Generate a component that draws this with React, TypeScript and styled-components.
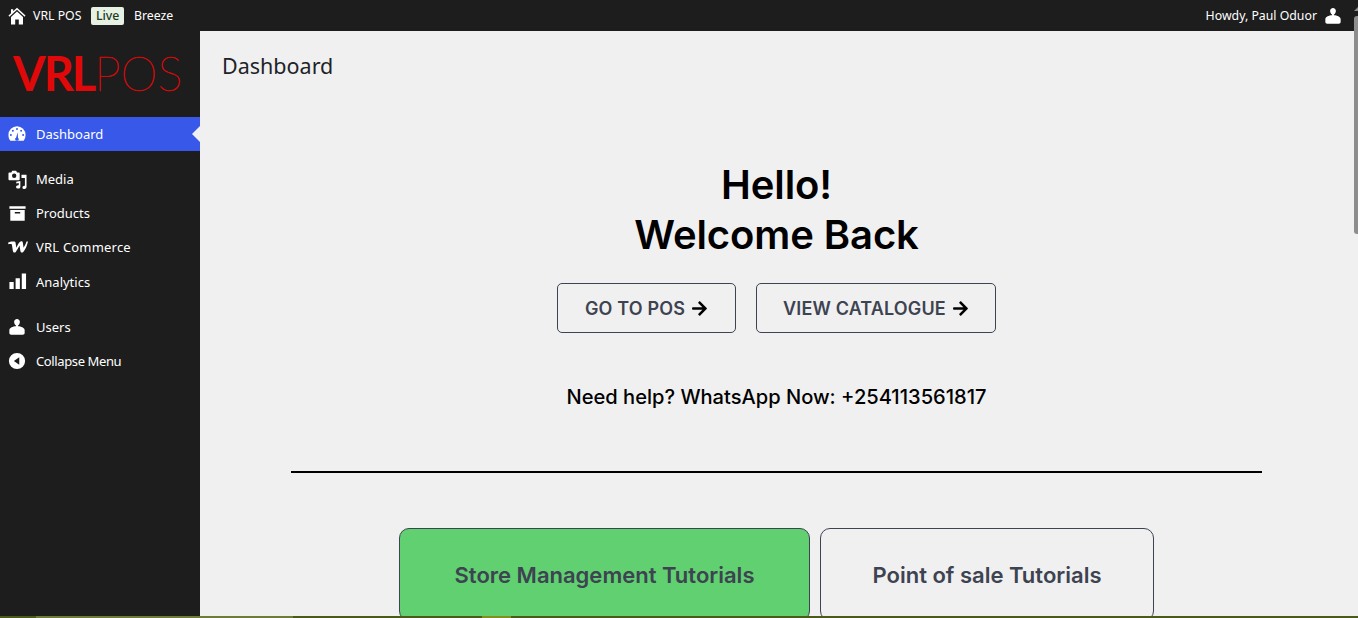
import React from 'react'
import styled, { createGlobalStyle } from 'styled-components'
import { FaArrowRight } from 'react-icons/fa'

const GlobalStyle = createGlobalStyle`
  html, body {
    margin: 0;
    padding: 0;
    height: 100%;
    overflow: hidden;
    background: #f0f0f1;
  }
  * { box-sizing: border-box; }
`

const HomeIcon = () => (
  <svg width={18} height={18} viewBox="0 0 18 18" fill="currentColor">
    <path d="M9 .8 17.500 8.600 16.600 9.700 9 2.800 1.400 9.700.5 8.600 3 6.300V2.200h2.200v2.100z" />
    <path d="M3 10 9 4.600l6 5.400v7.500h-4.200v-5H7.200v5H3z" />
  </svg>
)

const UserIcon = ({ size = 18 }: { size?: number }) => (
  <svg width={size} height={size} viewBox="0 0 20 20" fill="currentColor">
    <path d="M10 1c1.900 0 3.200 1.500 3.200 3.400 0 1.700-.9 3.200-2.100 3.800v1c3.300.2 7.400 1.600 7.400 4.400v3.200c0 1.200-1 1.700-2 1.700H3.500c-1 0-2-.5-2-1.700v-3.200c0-2.800 4.100-4.200 7.400-4.400v-1C7.700 7.600 6.800 6.100 6.800 4.400 6.800 2.500 8.100 1 10 1z" />
  </svg>
)

const DashboardIcon = () => (
  <svg width={18} height={18} viewBox="0 0 20 20" fill="currentColor">
    <path
      fillRule="evenodd"
      d="M10 1.500a9.500 9.500 0 0 0-9.500 9.500c0 2.500.7 4.700 2.100 6.500h14.800a10 10 0 0 0 2.100-6.500A9.500 9.500 0 0 0 10 1.500zM10 3.400a1.100 1.100 0 1 1 0 2.200 1.100 1.100 0 0 1 0-2.200zM5.400 5.300a1.100 1.100 0 1 1 0 2.200 1.100 1.100 0 0 1 0-2.200zM14.600 5.300a1.100 1.100 0 1 1 0 2.200 1.100 1.100 0 0 1 0-2.200zM3.200 9.900a1.100 1.100 0 1 1 0 2.200 1.100 1.100 0 0 1 0-2.200zM16.800 9.900a1.100 1.100 0 1 1 0 2.200 1.100 1.100 0 0 1 0-2.200zM10.700 8l.5 6.400c.5.300.8.800.8 1.400 0 .7-.4 1.200-1 1.500H8.900c-.6-.3-1-.8-1-1.500 0-.7.500-1.300 1.100-1.500z"
    />
  </svg>
)

const MediaIcon = () => (
  <svg width={19} height={19} viewBox="0 0 20 20" fill="currentColor">
    <path
      fillRule="evenodd"
      d="M1.500 2.500h2l.9-1.700h4.200l.9 1.700h1.800c.6 0 1 .4 1 1v6.200c0 .6-.4 1-1 1h-9.800c-.6 0-1-.4-1-1V3.500c0-.6.400-1 1-1zm5 1.300a2.300 2.300 0 1 0 0 4.600 2.300 2.300 0 0 0 0-4.600z"
    />
    <path d="M14.200 5H19.500v13c0 1.200-1 2-2.200 2-1.100 0-2.100-.7-2.100-1.700s1-1.800 2.100-1.800c.2 0 .4 0 .5.100V8.300h-3.600zM8.700 12.400l4.300-.8v6c0 1.200-1 2-2.300 2s-2.200-.8-2.200-1.800.9-1.800 2.100-1.800c.3 0 .5 0 .7.100v-2.400l-2.600.5z" />
  </svg>
)

const ArchiveIcon = () => (
  <svg width={19} height={18} viewBox="0 0 20 20" fill="currentColor">
    <path
      fillRule="evenodd"
      d="M1 2.500h18v2.700H1zM2 6.700h16v11.800H2zM7 9v1.500h6V9z"
    />
  </svg>
)

const CommerceIcon = () => (
  <svg width={20} height={12} viewBox="0 0 40 24" fill="currentColor">
    <path d="M0 3.500C3.500 1.200 8.500.5 12.800 1.200c1.400.2 2.200 1.300 2.400 2.700l1.500 9.500C19 7.800 22.300 2.200 25.200 1c2-.8 4.200 0 4.500 2.300l1.500 10.100C33.800 9 36 4.500 37 1h3c-1.600 7.600-5 15.700-9.500 21-1.800 2.100-5.100 1.500-5.600-1.500L23 8.800c-2.300 4.500-5 9.500-7.500 13-1.500 2.100-5 1.800-5.600-1.300L7.600 6.600C5.700 5.600 3 5.800 1 6.300z" />
  </svg>
)

const ChartIcon = () => (
  <svg width={19} height={19} viewBox="0 0 20 20" fill="currentColor">
    <path d="M1.500 10.500h4.500V18H1.500zM8 6.500h4.500V18H8zM14.500 1.500H19V18h-4.500z" />
  </svg>
)

const CollapseIcon = () => (
  <svg width={18} height={18} viewBox="0 0 20 20" fill="currentColor">
    <path
      fillRule="evenodd"
      d="M10 1a9 9 0 1 1 0 18 9 9 0 0 1 0-18zM12.500 5.800 6.500 10l6 4.200z"
    />
  </svg>
)

const navTop = [
  { label: 'Media', icon: <MediaIcon />, spacing: 0 },
  { label: 'Products', icon: <ArchiveIcon />, spacing: 0 },
  { label: 'VRL Commerce', icon: <CommerceIcon />, spacing: 0.2 },
  { label: 'Analytics', icon: <ChartIcon />, spacing: 0 },
]

const navBottom = [
  { label: 'Users', icon: <UserIcon />, spacing: 0 },
  { label: 'Collapse Menu', icon: <CollapseIcon />, spacing: -0.38 },
]

export default function App() {
  return (
    <Page>
      <GlobalStyle />
      <TopBar>
        <TopLeft>
          <HomeLink>
            <HomeIcon />
          </HomeLink>
          <span>VRL POS</span>
          <LiveBadge>Live</LiveBadge>
          <span>Breeze</span>
        </TopLeft>
        <TopRight>
          <span>Howdy, Paul Oduor</span>
          <UserIcon size={18} />
        </TopRight>
      </TopBar>
      <Body>
        <Sidebar>
          <Logo>
            <LogoBold>VRL</LogoBold>
            <LogoThin>POS</LogoThin>
          </Logo>
          <NavRow $active>
            <NavIcon>
              <DashboardIcon />
            </NavIcon>
            Dashboard
          </NavRow>
          <NavGroup>
            {navTop.map((item) => (
              <NavRow key={item.label} $spacing={item.spacing}>
                <NavIcon>{item.icon}</NavIcon>
                {item.label}
              </NavRow>
            ))}
          </NavGroup>
          <NavGroup>
            {navBottom.map((item) => (
              <NavRow key={item.label} $spacing={item.spacing}>
                <NavIcon>{item.icon}</NavIcon>
                {item.label}
              </NavRow>
            ))}
          </NavGroup>
        </Sidebar>
        <Main>
          <PageTitle>Dashboard</PageTitle>
          <Hero>
            <Greeting>
              Hello!
              <br />
              Welcome Back
            </Greeting>
            <Actions>
              <ActionButton $width={179}>
                GO TO POS <FaArrowRight size={17} color="#000" />
              </ActionButton>
              <ActionButton $width={240}>
                VIEW CATALOGUE <FaArrowRight size={17} color="#000" />
              </ActionButton>
            </Actions>
            <Help>Need help? WhatsApp Now: +254113561817</Help>
            <Divider />
            <Tabs>
              <Tab $width={411} $active>
                Store Management Tutorials
              </Tab>
              <Tab $width={334}>Point of sale Tutorials</Tab>
            </Tabs>
          </Hero>
        </Main>
      </Body>
      <ScrollThumb />
      <ScrollArrow />
      <BottomStrip>
        <StripLight />
        <StripBright />
      </BottomStrip>
    </Page>
  )
}

const Page = styled.div`
  position: relative;
  height: 618px;
  overflow: hidden;
  display: flex;
  flex-direction: column;
  font-family: 'Noto Sans', 'Open Sans', sans-serif;
`
const TopBar = styled.header`
  height: 31px;
  flex: none;
  background: #1d1d1d;
  color: #fff;
  font-size: 12.3px;
  display: flex;
  align-items: center;
  justify-content: space-between;
  padding: 0 16px 0 8px;
`
const TopLeft = styled.div`
  display: flex;
  align-items: center;
  gap: 8px;
`
const HomeLink = styled.span`
  display: flex;
  margin-right: -1px;
`
const LiveBadge = styled.span`
  margin: 0 2px;
  background: #e6f1e4;
  color: #1d3a22;
  border-radius: 2px;
  padding: 1px 4.5px;
  line-height: 16px;
  font-weight: 500;
`
const TopRight = styled.div`
  display: flex;
  align-items: center;
  gap: 7px;
`
const Body = styled.div`
  flex: 1;
  display: flex;
  min-height: 0;
`
const Sidebar = styled.aside`
  width: 200px;
  flex: none;
  background: #1d1d1d;
  color: #fff;
`
const Logo = styled.div`
  height: 86px;
  display: flex;
  align-items: center;
  padding: 0 0 3px 13px;
  color: #e00808;
  font-family: Lato, sans-serif;
  font-size: 47px;
`
const LogoBold = styled.span`
  font-weight: 700;
  letter-spacing: -2px;
`
const LogoThin = styled.span`
  font-weight: 100;
  letter-spacing: 0;
  -webkit-text-stroke: 0.5px #d40a0a;
`
const NavGroup = styled.div`
  margin-top: 10.8px;
`
const NavRow = styled.div<{ $active?: boolean; $spacing?: number }>`
  position: relative;
  height: 34.2px;
  display: flex;
  align-items: center;
  padding-left: 8px;
  font-size: 13px;
  letter-spacing: ${(p) => p.$spacing ?? 0}px;
  color: #fff;
  background: ${(p) => (p.$active ? '#3858e9' : 'transparent')};
  &::after {
    content: '';
    display: ${(p) => (p.$active ? 'block' : 'none')};
    position: absolute;
    right: 0;
    top: 50%;
    margin-top: -8px;
    border: 8px solid transparent;
    border-right-color: #f0f0f1;
  }
`
const NavIcon = styled.span`
  width: 28px;
  flex: none;
  display: flex;
  align-items: center;
`
const Main = styled.main`
  flex: 1;
  min-width: 0;
  padding: 0 5px 0 22px;
  color: #000;
`
const PageTitle = styled.h1`
  margin: 0;
  padding-top: 20px;
  font-size: 21.5px;
  line-height: 30px;
  font-weight: 400;
  color: #1d2327;
`
const Hero = styled.section`
  display: flex;
  flex-direction: column;
  align-items: center;
  margin-left: -22px;
  padding-top: 79px;
  font-family: Inter, sans-serif;
`
const Greeting = styled.h2`
  margin: 0;
  font-size: 40px;
  line-height: 50px;
  font-weight: 600;
  text-align: center;
  letter-spacing: -0.1px;
`
const Actions = styled.div`
  display: flex;
  gap: 20px;
  margin-top: 23px;
`
const ActionButton = styled.button<{ $width: number }>`
  width: ${(p) => p.$width}px;
  height: 50px;
  display: flex;
  align-items: center;
  justify-content: center;
  gap: 6px;
  background: transparent;
  border: 1px solid #3d4350;
  border-radius: 5px;
  color: #3d4350;
  font-family: inherit;
  font-size: 18px;
  font-weight: 600;
  letter-spacing: 0.15px;
`
const Help = styled.p`
  margin: 50px 0 0;
  font-size: 20.1px;
  line-height: 28px;
  font-weight: 500;
`
const Divider = styled.hr`
  width: 971px;
  height: 2px;
  margin: 60px 0 0;
  border: none;
  background: #000;
`
const Tabs = styled.div`
  display: flex;
  gap: 10px;
  margin-top: 55px;
`
const Tab = styled.div<{ $width: number; $active?: boolean }>`
  width: ${(p) => p.$width}px;
  height: 93px;
  display: flex;
  align-items: center;
  justify-content: center;
  border: 1px solid #3d4350;
  border-radius: 10px;
  background: ${(p) => (p.$active ? '#60d070' : 'transparent')};
  color: #3d4350;
  font-size: 22px;
  font-weight: 600;
`
const ScrollThumb = styled.div`
  position: absolute;
  top: 16px;
  right: 0;
  width: 4px;
  height: 218px;
  background: #8d8d8d;
  border-radius: 3px 0 0 3px;
`
const ScrollArrow = styled.div`
  position: absolute;
  top: 7px;
  right: 0;
  border-left: 4px solid transparent;
  border-bottom: 4px solid #8d8d8d;
`
const BottomStrip = styled.div`
  position: absolute;
  left: 0;
  right: 0;
  bottom: 0;
  height: 2px;
  background: #4a5a18;
`
const StripLight = styled.div`
  position: absolute;
  left: 36px;
  width: 257px;
  height: 2px;
  background: #6e7c3a;
`
const StripBright = styled.div`
  position: absolute;
  left: 482px;
  width: 29px;
  height: 2px;
  background: #7f8f20;
`
